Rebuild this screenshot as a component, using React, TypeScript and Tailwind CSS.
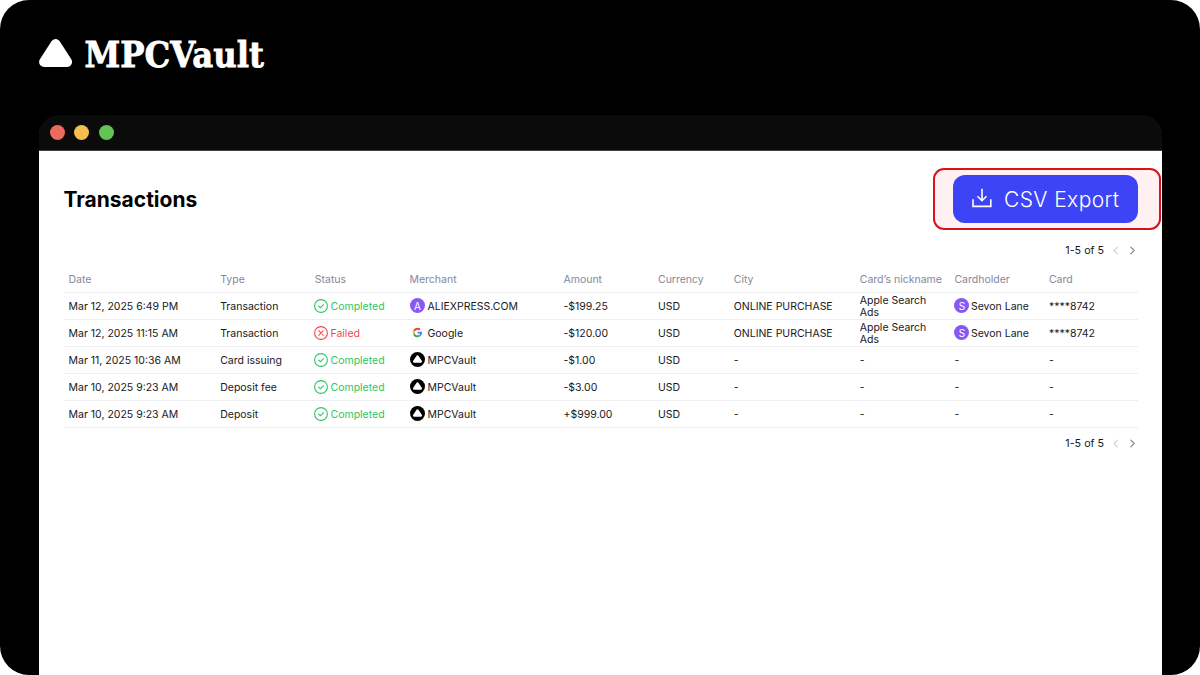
import React from "react";

type Status = "Completed" | "Failed";
type Merchant = "ALIEXPRESS.COM" | "Google" | "MPCVault";

interface Row {
  date: string;
  type: string;
  status: Status;
  merchant: Merchant;
  amount: string;
  city: string;
  nickname: string;
  holder: string;
  card: string;
}

const HEADERS = ["Date", "Type", "Status", "Merchant", "Amount", "Currency", "City", "Card’s nickname", "Cardholder", "Card"];

const ROWS: Row[] = [
  { date: "Mar 12, 2025 6:49 PM", type: "Transaction", status: "Completed", merchant: "ALIEXPRESS.COM", amount: "-$199.25", city: "ONLINE PURCHASE", nickname: "Apple Search Ads", holder: "Sevon Lane", card: "****8742" },
  { date: "Mar 12, 2025 11:15 AM", type: "Transaction", status: "Failed", merchant: "Google", amount: "-$120.00", city: "ONLINE PURCHASE", nickname: "Apple Search Ads", holder: "Sevon Lane", card: "****8742" },
  { date: "Mar 11, 2025 10:36 AM", type: "Card issuing", status: "Completed", merchant: "MPCVault", amount: "-$1.00", city: "-", nickname: "-", holder: "-", card: "-" },
  { date: "Mar 10, 2025 9:23 AM", type: "Deposit fee", status: "Completed", merchant: "MPCVault", amount: "-$3.00", city: "-", nickname: "-", holder: "-", card: "-" },
  { date: "Mar 10, 2025 9:23 AM", type: "Deposit", status: "Completed", merchant: "MPCVault", amount: "+$999.00", city: "-", nickname: "-", holder: "-", card: "-" },
];

const GRID =
  "grid grid-cols-[151.7px_94.6px_94.7px_154px_94.5px_75.8px_126px_94.7px_94.5px_93.5px] items-center border-b border-[#efeff1]";

const CELL = "pl-[5px] pt-[2px]";

function Brand() {
  return (
    <svg width="240" height="52" viewBox="0 0 240 52" className="block overflow-visible">
      <path d="M16.6 8.2 28 26H5.2Z" fill="#fff" stroke="#fff" strokeWidth="10.2" strokeLinejoin="round" />
      <text x="45.4" y="30.8" textLength="179.5" lengthAdjust="spacingAndGlyphs" strokeWidth="0.8" className="fill-white stroke-white font-['DejaVu_Serif',serif] text-[36px] font-bold">
        MPCVault
      </text>
    </svg>
  );
}

function StatusCell({ status }: { status: Status }) {
  const ok = status === "Completed";
  return (
    <div className={ok ? "flex items-center gap-[2.5px] text-[#2dc562]" : "flex items-center gap-[2.5px] text-[#f0484a]"}>
      <svg width="14" height="14" viewBox="0 0 13 13" fill="none" stroke="currentColor" strokeLinecap="round" strokeLinejoin="round" className="-ml-[0.8px] shrink-0">
        <circle cx="6.5" cy="6.5" r="5.95" strokeWidth="1" />
        {ok ? <path d="M4.3 6.6 6 8.1 8.9 5.3" strokeWidth="1" /> : <path d="m4.4 4.4 4.2 4.2m0-4.2L4.4 8.6" strokeWidth="1" />}
      </svg>
      <span className="pt-[2px]">{status}</span>
    </div>
  );
}

function Initial({ letter }: { letter: string }) {
  return (
    <span className="mb-px flex size-[15px] shrink-0 items-center justify-center rounded-full bg-[#8658f6] text-[10px] leading-none text-white">
      {letter}
    </span>
  );
}

function GoogleMark() {
  return (
    <svg width="15" height="15" viewBox="-14 -14 76 76" className="mb-px">
      <path fill="#EA4335" d="M24 9.5c3.54 0 6.71 1.22 9.21 3.6l6.85-6.85C35.9 2.38 30.47 0 24 0 14.62 0 6.51 5.38 2.56 13.22l7.98 6.19C12.43 13.72 17.74 9.5 24 9.5z" />
      <path fill="#4285F4" d="M46.98 24.55c0-1.57-.15-3.09-.38-4.55H24v9.02h12.94c-.58 2.96-2.26 5.48-4.78 7.18l7.73 6c4.51-4.18 7.09-10.36 7.09-17.65z" />
      <path fill="#FBBC05" d="M10.53 28.59A14.5 14.5 0 0 1 9.77 24c0-1.6.27-3.14.76-4.59l-7.98-6.19A23.9 23.9 0 0 0 0 24c0 3.88.92 7.54 2.56 10.78z" />
      <path fill="#34A853" d="M24 48c6.48 0 11.93-2.13 15.89-5.81l-7.73-6c-2.15 1.45-4.92 2.3-8.16 2.3-6.26 0-11.57-4.22-13.47-9.91l-7.98 6.19C6.51 42.62 14.62 48 24 48z" />
    </svg>
  );
}

function VaultMark() {
  return (
    <svg width="15" height="15" viewBox="0 0 15 15" className="mb-px">
      <circle cx="7.5" cy="7.5" r="7.5" fill="#000" />
      <path d="M7.5 4.6 10.7 9.5H4.3Z" fill="#fff" stroke="#fff" strokeWidth="2.6" strokeLinejoin="round" />
    </svg>
  );
}

function MerchantCell({ name }: { name: Merchant }) {
  return (
    <div className="flex items-center gap-[2.5px]">
      {name === "ALIEXPRESS.COM" ? <Initial letter="A" /> : name === "Google" ? <GoogleMark /> : <VaultMark />}
      <span className="pt-[2px]">{name}</span>
    </div>
  );
}

function Pager() {
  return (
    <div className="flex h-4 items-center justify-end text-[10.7px] text-[#18181b]">
      <span>1-5 of 5</span>
      <svg width="34" height="12" viewBox="0 0 34 12" fill="none" strokeWidth="1.1" strokeLinecap="round" strokeLinejoin="round">
        <path d="M13.4 2.2 10 5.5l3.4 3.3" stroke="#d0d1da" />
        <path d="M26.8 2.2 30.2 5.5l-3.4 3.3" stroke="#7d8095" />
      </svg>
    </div>
  );
}

export default function App() {
  return (
    <div className="h-[675px] w-[1200px] overflow-hidden bg-white font-['Inter',sans-serif]">
      <div className="flex h-full flex-col overflow-hidden rounded-[29px] bg-black pl-[39px] pr-[38px]">
        <header className="h-[115px] shrink-0 pt-[36px]">
          <Brand />
        </header>
        <main className="flex flex-1 flex-col">
          <div className="flex h-9 shrink-0 items-center gap-[9.5px] rounded-t-[20px] bg-[#0b0b0b] pb-px pl-[10.5px] shadow-[inset_0_-1px_0_#414141]">
            <span className="size-[15px] rounded-full bg-[#ee6a5f]" />
            <span className="size-[15px] rounded-full bg-[#f5bf4f]" />
            <span className="size-[15px] rounded-full bg-[#61c554]" />
          </div>
          <div className="flex items-start justify-between bg-white pl-[24.5px] pr-px pt-[17px]">
            <h1 className="mt-[16px] text-[21px] font-bold leading-8 text-black">Transactions</h1>
            <div className="flex h-[62px] w-[228px] items-center rounded-[11px] border-2 border-[#d91418] bg-[#fff1f1] pl-[18px]">
              <button className="flex h-12 w-[185px] items-center rounded-[12px] bg-[#3c44f5] pl-[19px] text-[21px] font-light text-white">
                <svg width="20" height="20" viewBox="0 0 20 20" fill="none" stroke="currentColor" strokeWidth="1.6" className="-mt-[2px] shrink-0">
                  <path d="M10 .8V12.5M5.5 8.2 10 12.7l4.5-4.5M1 11.3V18.4H18.8V11.3" />
                </svg>
                <span className="ml-[12px] whitespace-nowrap pt-px tracking-[0.4px]">CSV Export</span>
              </button>
            </div>
          </div>
          <div className="flex-1 bg-white pl-[24.5px] pr-6 pt-[13px]">
            <Pager />
            <div className="whitespace-nowrap pt-2 text-[10.5px] leading-[12px] text-[#18181b]">
              <div className={GRID + " h-[26px] text-[#85889b]"}>
                {HEADERS.map((h) => (
                  <div key={h} className="pl-[5px]">{h}</div>
                ))}
              </div>
              {ROWS.map((r, i) => (
                <div key={i} className={GRID + " h-[27px]"}>
                  <div className={CELL}>{r.date}</div>
                  <div className={CELL}>{r.type}</div>
                  <div className="pl-[5px]"><StatusCell status={r.status} /></div>
                  <div className="pl-[5.5px]"><MerchantCell name={r.merchant} /></div>
                  <div className={CELL}>{r.amount}</div>
                  <div className={CELL}>USD</div>
                  <div className={CELL}>{r.city}</div>
                  <div className={CELL + " whitespace-normal pr-[5px]"}>{r.nickname}</div>
                  <div className="flex items-center gap-[1.5px] pl-[5px]">
                    {r.holder !== "-" && <Initial letter="S" />}
                    <span className="pt-[2px]">{r.holder}</span>
                  </div>
                  <div className={CELL}>{r.card}</div>
                </div>
              ))}
            </div>
            <div className="pt-[8px]">
              <Pager />
            </div>
          </div>
        </main>
      </div>
    </div>
  );
}
